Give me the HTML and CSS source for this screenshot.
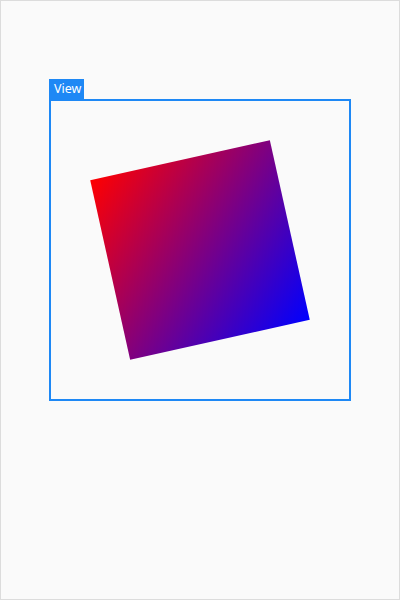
FILE: index.html
```html
<!DOCTYPE html>
<html>
<head>
<meta charset="utf-8">
<link rel="stylesheet" href="styles.css">
</head>
<body>
<div class="page">
  <div class="view">
    <div class="label">View</div>
    <div class="frame">
      <div class="square"></div>
    </div>
  </div>
</div>
</body>
</html>
```
FILE: styles.css
```css
html, body {
  margin: 0;
  padding: 0;
}
.page {
  width: 400px;
  height: 600px;
  box-sizing: border-box;
  border: 1px solid #dcdcdc;
  background: #fafafa;
  padding: 78px 0 0 48px;
  font-family: "Noto Sans", "Open Sans", sans-serif;
}
.view {
  display: flex;
  flex-direction: column;
  align-items: flex-start;
}
.label {
  width: 35px;
  height: 20px;
  box-sizing: border-box;
  padding: 0 0 0 5px;
  background: #1e88f5;
  color: #ffffff;
  font-size: 12.5px;
  line-height: 20px;
  white-space: nowrap;
}
.frame {
  width: 302px;
  height: 302px;
  box-sizing: border-box;
  border: 2px solid #1e88f5;
  display: grid;
  place-items: center;
}
.square {
  width: 184px;
  height: 184px;
  background: linear-gradient(135deg, #ff0000, #0000ff);
  transform: rotate(-12.53deg);
}
```
